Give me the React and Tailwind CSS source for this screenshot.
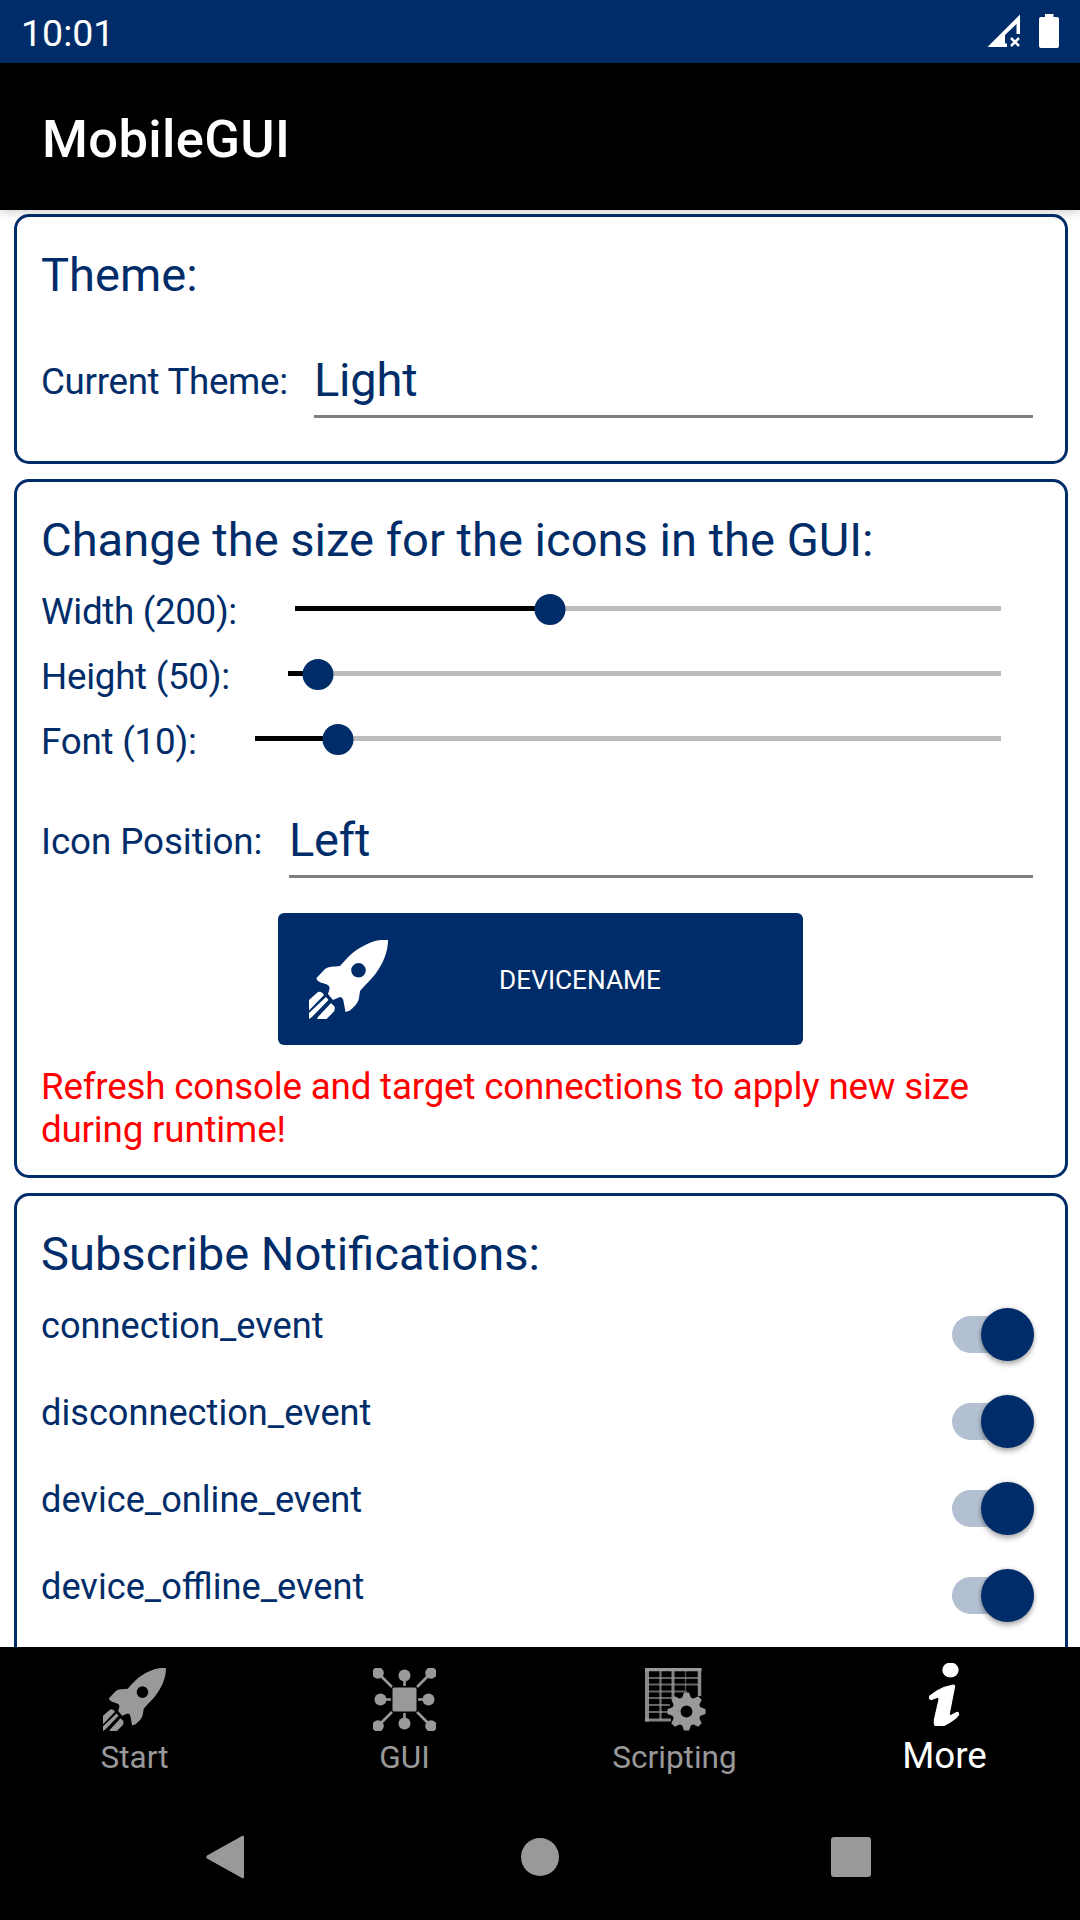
import React from "react";

function Rocket({ className }) {
  return (
    <svg viewBox="0 0 79 79" className={className} fill="currentColor">
      <path
        fillRule="evenodd"
        d="M79 0H72C62 1 51 7 43 13.500C38 18 34 22.500 31 26C25 27 20 25.500 15.500 29.500L7.500 38C7.500 41 11 42.500 15 43.500C19 44.500 21 46 20.500 49L19 54L24 60L31 57C34 57.500 34.500 60 35 64L36.500 72L41 70.500C44 67.500 49 64 50 58L51 51C55 46 61 41 66 34.500C74 24 79 12 79 0ZM49.500 23A7.300 7.300 0 1 1 49.500 37.600A7.300 7.300 0 1 1 49.500 23Z"
      />
      <path d="M0 60L9 52Q11 51 13.500 53L15 55L0 70.500ZM0 73L17 57L19.500 60L3 77L0 79ZM9 77L22 63L25.500 66.500Q26.500 70 24 72.500L17.500 79H8Z" />
    </svg>
  );
}

function Hub({ className }) {
  return (
    <svg viewBox="0 0 63 63" className={className} fill="currentColor">
      <g stroke="currentColor" strokeWidth="2.600">
        <path d="M5 5L19 19M58 5L44 19M5 58L19 44M58 58L44 44M31.500 8V18M31.500 45V55M8 31.500H18M45 31.500H55" />
      </g>
      <rect x="19.500" y="19.500" width="24" height="24" rx="1.500" />
      <circle cx="5" cy="5" r="5.800" />
      <circle cx="58" cy="5" r="5.800" />
      <circle cx="5" cy="58" r="5.800" />
      <circle cx="58" cy="58" r="5.800" />
      <circle cx="31.500" cy="7.500" r="6" />
      <circle cx="31.500" cy="55.500" r="6" />
      <circle cx="7.500" cy="31.500" r="6" />
      <circle cx="55.500" cy="31.500" r="6" />
    </svg>
  );
}

function SheetGear({ className }) {
  return (
    <svg viewBox="0 0 63 63" className={className}>
      <g stroke="currentColor" fill="none">
        <path d="M2 1.500H58.500" strokeWidth="3.500" />
        <path d="M4 0V53.500" strokeWidth="4" opacity="0.9" />
        <path d="M56.500 0V28" strokeWidth="3.500" opacity="0.9" />
        <path d="M2 52H28" strokeWidth="3" opacity="0.85" />
        <path d="M5 10H56M5 16.500H56M5 23.500H44M5 30H31M5 37H27M5 44H26" strokeWidth="1.800" opacity="0.65" />
        <path d="M17.500 3V52" strokeWidth="2.200" opacity="0.75" />
        <path d="M30 3V30" strokeWidth="3" opacity="0.85" />
        <path d="M42.500 3V22" strokeWidth="1.500" opacity="0.5" />
      </g>
      <g transform="translate(43.500 43.500)">
        <circle r="16.500" fill="black" />
        <circle r="10.200" fill="none" stroke="currentColor" strokeWidth="8.500" />
        {[0, 45, 90, 135, 180, 225, 270, 315].map((angle) => (
          <path key={angle} transform={`rotate(${angle})`} d="M-5 -12L-2.500 -19H2.500L5 -12Z" fill="currentColor" />
        ))}
      </g>
    </svg>
  );
}

function Info({ className }) {
  return (
    <svg viewBox="0 0 63 63" className={className} fill="currentColor">
      <ellipse cx="37.500" cy="7" rx="8.200" ry="7.500" />
      <path
        d="M40 22C34 23 29 25 24 28L17 33Q15.500 35.500 18 36.500L24 34.500Q26.500 34 26 37L22.500 52Q20 61 22.500 63H30C36 60 42 57 45.500 52Q46 49 43.500 49.500L38 52.500Q36 53 36.500 49.500L41.500 24Q42 22 40 22Z"
        stroke="currentColor"
        strokeWidth="1.200"
      />
    </svg>
  );
}

function StatusBar() {
  return (
    <div className="flex h-[63px] shrink-0 items-center justify-between bg-[#002d69] pr-[21px] pl-[21px] text-white">
      <span className="pt-[4px] text-[37.500px] leading-none">10:01</span>
      <svg viewBox="0 0 73 63" className="h-[63px] w-[73px]" fill="currentColor">
        <path d="M1.500 47L34 14.500V34H30.500V24L19 35V43.500H21V47Z" />
        <path d="M25 38L33 46M33 38L25 46" stroke="currentColor" strokeWidth="2.500" />
        <path d="M59 14H67.500V17H71Q73 17 73 19V46Q73 48 71 48H55Q53 48 53 46V19Q53 17 55 17H59Z" />
      </svg>
    </div>
  );
}

function Card({ className, title, children }) {
  return (
    <section
      className={`ml-[14px] flex w-[1054px] shrink-0 flex-col rounded-[15px] border-[3px] border-[#002d69] pt-[30px] pr-8 pl-6 ${className}`}
    >
      <h2 className="h-14 text-[47.100px] leading-[56px] whitespace-nowrap">{title}</h2>
      {children}
    </section>
  );
}

function Picker({ className, label, labelClass, value }) {
  return (
    <div className={`flex h-[73px] shrink-0 items-center ${className}`}>
      <span className={`shrink-0 whitespace-nowrap ${labelClass}`}>{label}</span>
      <div className="h-full flex-1 border-b-[3px] border-[#7f7f7f] text-[47px] leading-[70px] tracking-[-0.200px]">
        {value}
      </div>
    </div>
  );
}

function Slider({ label, labelClass, percent }) {
  return (
    <div className="flex h-[65px] shrink-0 items-center pr-8">
      <span className={`shrink-0 whitespace-nowrap ${labelClass}`}>{label}</span>
      <div className="relative mb-[6px] h-[5px] flex-1 bg-[#bcbcbc]">
        <div className="h-full bg-black" style={{ width: `${percent}%` }} />
        <div
          className="absolute top-[-12px] size-[31px] -translate-x-1/2 rounded-full bg-[#002d69]"
          style={{ left: `${percent}%` }}
        />
      </div>
    </div>
  );
}

function ToggleRow({ label }) {
  return (
    <div className="flex h-[87px] shrink-0 items-center justify-between">
      <span className="pb-[18px] text-[36.200px]">{label}</span>
      <div className="-mr-px flex h-[37px] w-[82.500px] items-center justify-end rounded-full bg-[#b2c0d2]">
        <div className="size-[53px] shrink-0 rounded-full bg-[#002d69] shadow-[0_4px_5px_rgba(0,0,0,0.25),0_0_4px_rgba(0,0,0,0.2)]" />
      </div>
    </div>
  );
}

function Tab({ icon: Icon, label, active }) {
  return (
    <div
      className={
        active
          ? "flex flex-1 flex-col items-center pt-4 pr-px text-[36.750px] text-white"
          : "flex flex-1 flex-col items-center pt-[21px] pr-px text-[31.500px] text-[#999999]"
      }
    >
      <Icon className="size-[63px]" />
      <span className={active ? "mt-2 leading-[44px]" : "mt-[7px] leading-[40px]"}>{label}</span>
    </div>
  );
}

const events = ["connection_event", "disconnection_event", "device_online_event", "device_offline_event"];

export default function App() {
  return (
    <div className="flex h-[1920px] w-[1080px] flex-col overflow-hidden bg-white font-['Roboto',sans-serif] text-[36.750px] leading-[43px] text-[#002d69]">
      <StatusBar />
      <header className="z-10 flex h-[147px] shrink-0 items-center bg-black pt-[5px] pl-[42px] text-[52.500px] font-medium tracking-[0.350px] text-white shadow-[0_2px_10px_rgba(0,0,0,0.2)]">
        MobileGUI
      </header>
      <main className="flex h-[1437px] shrink-0 flex-col gap-[15px] overflow-hidden pt-1">
        <Card className="h-[250px]" title="Theme:">
          <Picker
            className="mt-[42px]"
            label="Current Theme:"
            labelClass="w-[273px] tracking-[-0.320px]"
            value="Light"
          />
        </Card>
        <Card className="h-[699px]" title="Change the size for the icons in the GUI:">
          <div className="mt-[11px]">
            <Slider label="Width (200):" labelClass="w-[254px] tracking-[-0.330px]" percent={36.17} />
            <Slider label="Height (50):" labelClass="w-[247px] tracking-[-0.280px]" percent={4.27} />
            <Slider label="Font (10):" labelClass="w-[214px] tracking-[-0.220px]" percent={11.17} />
          </div>
          <Picker
            className="mt-[31px]"
            label="Icon Position:"
            labelClass="w-[248px] tracking-[-0.080px]"
            value="Left"
          />
          <button className="mt-[35px] ml-[237px] flex h-[132px] w-[525px] shrink-0 items-center rounded-[6px] bg-[#002d69] pr-[31px] pl-[31px] text-white">
            <Rocket className="size-[79px]" />
            <span className="flex-1 pt-[2px] text-center text-[26.250px]">DEVICENAME</span>
          </button>
          <p className="mt-5 tracking-[-0.190px] text-[#ff0000]">
            Refresh console and target connections to apply new size during runtime!
          </p>
        </Card>
        <Card className="h-[699px]" title="Subscribe Notifications:">
          <div className="mt-[9px]">
            {events.map((event) => (
              <ToggleRow key={event} label={event} />
            ))}
          </div>
        </Card>
      </main>
      <nav className="flex h-[147px] shrink-0 bg-black">
        <Tab icon={Rocket} label="Start" />
        <Tab icon={Hub} label="GUI" />
        <Tab icon={SheetGear} label="Scripting" />
        <Tab icon={Info} label="More" active />
      </nav>
      <div className="flex h-[126px] shrink-0 items-center bg-black pl-[206px] text-[#999999]">
        <svg viewBox="0 0 38 44" className="h-[44px] w-[38px]" fill="currentColor">
          <path d="M1 20.500L36 1Q38 0 38 2V42Q38 44 36 43L1 23.500Q-0.500 22 1 20.500Z" />
        </svg>
        <div className="ml-[277px] size-[38px] rounded-full bg-[#999999]" />
        <div className="ml-[272px] size-10 rounded-[3px] bg-[#999999]" />
      </div>
    </div>
  );
}
